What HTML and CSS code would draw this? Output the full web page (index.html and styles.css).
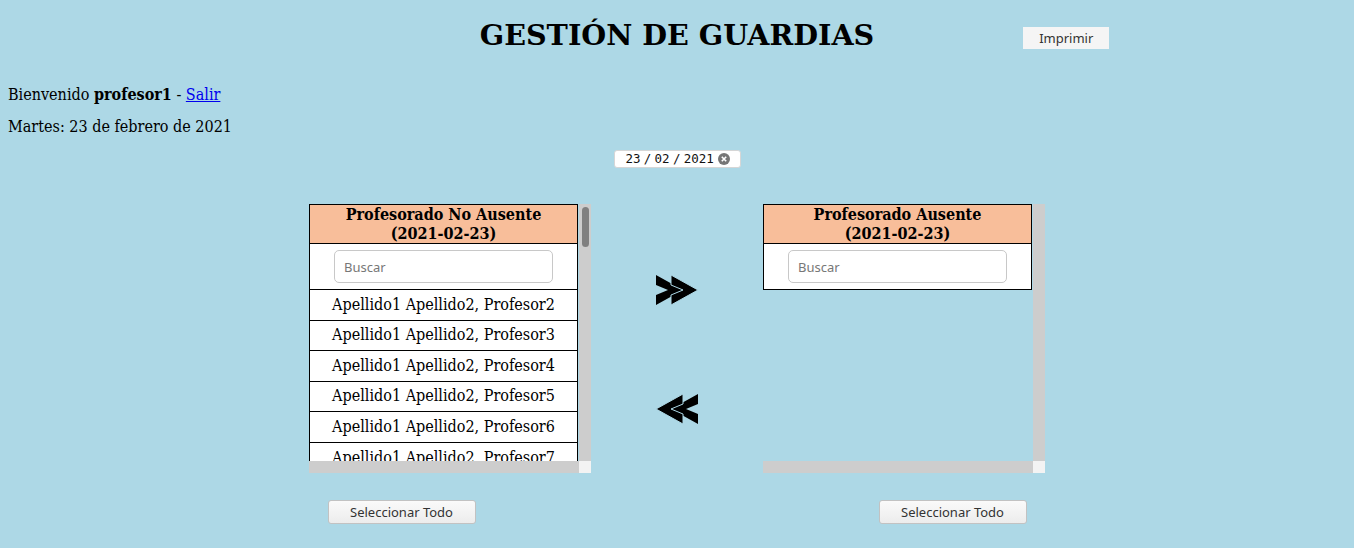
FILE: index.html
```html
<!DOCTYPE html>
<html lang="es">
<head>
<meta charset="utf-8">
<title>Gestión de guardias</title>
<link rel="stylesheet" href="styles.css">
</head>
<body>
<header class="top">
  <div></div>
  <h1 class="title">GESTIÓN DE GUARDIAS</h1>
  <button class="print">Imprimir</button>
</header>

<section class="info">
  <p>Bienvenido <b>profesor1</b> - <a href="#">Salir</a></p>
  <p>Martes: 23 de febrero de 2021</p>
</section>

<div class="date-row">
  <div class="date-input">
    <span class="seg">23</span><span class="sep">/</span><span class="seg">02</span><span class="sep">/</span><span class="seg">2021</span>
    <svg class="clear" width="12" height="12" viewBox="0 0 12 12"><circle cx="6" cy="6" r="6" fill="#767676"/><path d="M3.8 3.8 L8.2 8.2 M8.2 3.8 L3.8 8.2" stroke="#fff" stroke-width="1.6"/></svg>
  </div>
</div>

<main class="panels">
  <div class="scroller">
    <div class="viewport">
      <table class="list">
        <thead>
          <tr><th>Profesorado No Ausente<br>(2021-02-23)</th></tr>
          <tr><td class="search"><input type="text" placeholder="Buscar"></td></tr>
        </thead>
        <tbody>
          <tr><td>Apellido1 Apellido2, Profesor2</td></tr>
          <tr><td>Apellido1 Apellido2, Profesor3</td></tr>
          <tr><td>Apellido1 Apellido2, Profesor4</td></tr>
          <tr><td>Apellido1 Apellido2, Profesor5</td></tr>
          <tr><td>Apellido1 Apellido2, Profesor6</td></tr>
          <tr><td>Apellido1 Apellido2, Profesor7</td></tr>
        </tbody>
      </table>
    </div>
    <div class="vbar"><div class="thumb"></div></div>
    <div class="hbar"></div>
    <div class="corner"></div>
  </div>

  <div class="arrows">
    <svg class="arrow" width="42" height="30" viewBox="0 0 42 30">
      <polygon points="0,0 27,15 0,30 0,20 12,15 0,10" fill="#000"/>
      <polygon points="15,0 42,15 15,30 15,20 27,15 15,10" fill="#000" stroke="#add8e6" stroke-width="1"/>
    </svg>
    <svg class="arrow" width="42" height="30" viewBox="0 0 42 30">
      <polygon points="42,0 15,15 42,30 42,20 30,15 42,10" fill="#000"/>
      <polygon points="27,0 0,15 27,30 27,20 15,15 27,10" fill="#000" stroke="#add8e6" stroke-width="1"/>
    </svg>
  </div>

  <div class="scroller">
    <div class="viewport">
      <table class="list">
        <thead>
          <tr><th>Profesorado Ausente<br>(2021-02-23)</th></tr>
          <tr><td class="search"><input type="text" placeholder="Buscar"></td></tr>
        </thead>
      </table>
    </div>
    <div class="vbar"></div>
    <div class="hbar"></div>
    <div class="corner"></div>
  </div>
</main>

<footer class="actions">
  <button class="select-all">Seleccionar Todo</button>
  <button class="select-all">Seleccionar Todo</button>
</footer>
</body>
</html>
```

FILE: styles.css
```css
html, body {
  margin: 0;
  padding: 0;
}

body {
  background: #add8e6;
  font-family: "DejaVu Serif Condensed", "DejaVu Serif", serif;
  font-stretch: condensed;
  font-size: 16px;
  color: #000;
  padding: 0 8px;
}

.top {
  display: grid;
  grid-template-columns: 1fr auto 1fr;
  align-items: start;
  padding-top: 18.7px;
}

.title {
  margin: 0;
  font-family: "DejaVu Serif", serif;
  font-stretch: normal;
  font-size: 28.6px;
  line-height: 32.6px;
  font-weight: bold;
}

.print {
  justify-self: start;
  margin: 8px 0 0 149px;
  width: 86px;
  height: 22px;
  border: none;
  background: #f5f5f5;
  color: #333;
  font-family: "Noto Sans", sans-serif;
  font-stretch: normal;
  font-size: 13px;
  padding: 0;
}

.info {
  margin-top: 35px;
}

.info p {
  margin: 0;
  line-height: 18.6px;
}

.info p + p {
  margin-top: 13.4px;
}

.info a {
  color: #0000ee;
}

.date-row {
  display: flex;
  justify-content: center;
  margin-top: 12.7px;
}

.date-input {
  display: flex;
  align-items: center;
  width: 127px;
  height: 18px;
  box-sizing: border-box;
  background: #fff;
  border: 1px solid #d6d6d6;
  border-radius: 3px;
  padding-left: 11px;
  font-family: "DejaVu Sans Mono", monospace;
  font-stretch: normal;
  font-size: 12.5px;
  color: #111;
}

.sep {
  margin: 0 3.25px;
}

.clear {
  margin-left: 4px;
}

.panels {
  display: flex;
  justify-content: center;
  align-items: flex-start;
  margin-top: 36.5px;
}

.scroller {
  display: grid;
  grid-template-columns: 270px 12px;
  grid-template-rows: 257px 12px;
}

.viewport {
  overflow: hidden;
}

.vbar {
  background: #cdcdcd;
  padding: 3px 2.5px;
}

.thumb {
  height: 40px;
  background: #808080;
  border-radius: 4px;
}

.hbar {
  background: #cdcdcd;
}

.corner {
  background: #f3f3f3;
}

.list {
  width: 269px;
  border-collapse: collapse;
  background: #fff;
  border: 1px solid #000;
}

.list th {
  background: #f8be9a;
  font-size: 16px;
  line-height: 19px;
  padding: 0;
  border: 1px solid #000;
}

.list td {
  border: 1px solid #000;
  text-align: center;
  padding: 5.5px 0;
  line-height: 18.6px;
  white-space: nowrap;
}

.list td.search {
  padding: 6px 0;
}

.search input {
  width: 219px;
  height: 33px;
  box-sizing: border-box;
  border: 1px solid #c8c8c8;
  border-radius: 5px;
  padding: 0 9px;
  font-family: "Noto Sans", sans-serif;
  font-stretch: normal;
  font-size: 13px;
  display: block;
  margin: 0 auto;
}

.search input::placeholder {
  color: #777;
}

.arrows {
  width: 172px;
  display: flex;
  flex-direction: column;
  align-items: center;
  padding-top: 71px;
  gap: 89px;
}

.arrow {
  display: block;
}

.actions {
  display: flex;
  justify-content: center;
  gap: 403px;
  margin-top: 27px;
}

.select-all {
  width: 148px;
  height: 24px;
  border: 1px solid #c2c2c2;
  border-radius: 3px;
  background: linear-gradient(#fafafa, #ececec);
  font-family: "Noto Sans", sans-serif;
  font-stretch: normal;
  font-size: 13px;
  color: #333;
  padding: 0;
}
```
